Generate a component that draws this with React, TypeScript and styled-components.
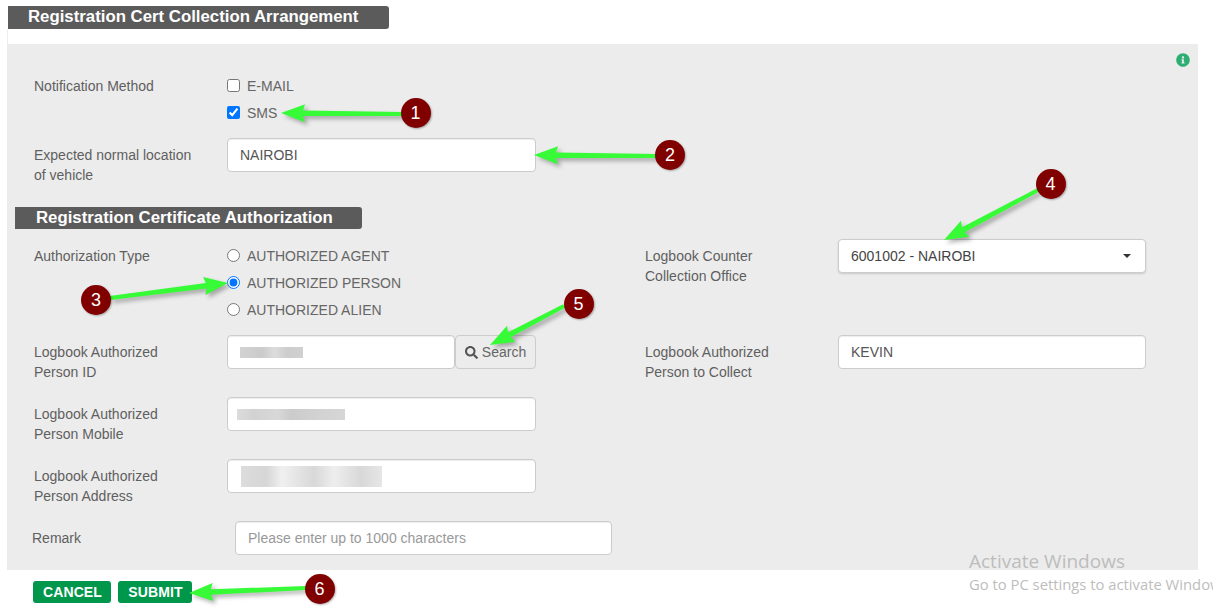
import { FaInfoCircle, FaSearch } from "react-icons/fa";
import styled, { createGlobalStyle } from "styled-components";

const GlobalStyle = createGlobalStyle`
  html, body {
    margin: 0;
    background: #fff;
    overflow: hidden;
  }
  body, input, select, button {
    font-family: "Liberation Sans", Arial, sans-serif;
    font-size: 14px;
  }
`;

const Page = styled.div`
  position: relative;
  width: 1213px;
  height: 616px;
  padding-top: 6px;
  box-sizing: border-box;
  overflow: hidden;
`;
const SectionTitle = styled.h2<{ $width: number; $inset: number }>`
  display: flex;
  align-items: center;
  box-sizing: border-box;
  width: ${(p) => p.$width}px;
  margin: 0;
  padding: 0 0 1px ${(p) => p.$inset}px;
  border-radius: 0 3px 3px 0;
  background: #5b5b5b;
  color: #fff;
  font-size: 16.8px;
  font-weight: 700;
`;
const TopTitle = styled(SectionTitle)`
  height: 23px;
  margin-left: 8px;
`;
const InnerTitle = styled(SectionTitle)`
  height: 22px;
  margin: 22px 0 10px -19px;
`;
const TitleGap = styled.div`
  height: 15px;
  margin-left: 7px;
  border-left: 1px solid #eeeeee;
`;
const Panel = styled.section`
  box-sizing: border-box;
  width: 1191px;
  height: 526px;
  margin-left: 7px;
  padding: 9px 8px 15px 27px;
  background: #ececec;
`;
const InfoRow = styled.div`
  display: flex;
  justify-content: flex-end;
  height: 14px;
  margin-bottom: 5px;
  color: #2fae73;
  font-size: 14px;
`;
const Field = styled.div`
  display: flex;
  align-items: flex-start;
`;
const FieldLabel = styled.label`
  flex: none;
  width: 193px;
  padding-top: 7px;
  color: #5f5f5f;
  line-height: 20px;
`;
const NotifyLabel = styled(FieldLabel)`
  padding-top: 4px;
`;
const OptionGroup = styled.div`
  display: grid;
  grid-auto-rows: 27px;
`;
const AuthGroup = styled(OptionGroup)`
  padding-top: 3px;
`;
const Option = styled.label`
  display: flex;
  align-items: center;
  gap: 7px;
  color: #666;
`;
const Tick = styled.input`
  flex: none;
  width: 13px;
  height: 13px;
  margin: 0;
`;
const LocationField = styled(Field)`
  margin-top: 12px;
`;
const TextInput = styled.input<{ $width?: number }>`
  box-sizing: border-box;
  width: ${(p) => p.$width ?? 309}px;
  height: 34px;
  padding: 0 12px;
  border: 1px solid #ccc;
  border-radius: 4px;
  background: #fff;
  box-shadow: inset 0 1px 1px rgba(0, 0, 0, 0.075);
  color: #555;
  outline: none;
  &::placeholder {
    color: #999;
    opacity: 1;
  }
`;
const MaskedInput = styled.div<{ $width?: number }>`
  display: flex;
  align-items: center;
  box-sizing: border-box;
  width: ${(p) => p.$width ?? 309}px;
  height: 34px;
  padding-left: 12px;
  border: 1px solid #ccc;
  border-radius: 4px;
  background: #fff;
  box-shadow: inset 0 1px 1px rgba(0, 0, 0, 0.075);
`;
const Redacted = styled.span<{ $width: number; $height: number; $shift: number; $stops: string }>`
  width: ${(p) => p.$width}px;
  height: ${(p) => p.$height}px;
  margin-left: ${(p) => p.$shift}px;
  background: linear-gradient(90deg, ${(p) => p.$stops});
`;
const FormGrid = styled.div`
  display: grid;
  grid-template-columns: 611px 1fr;
  grid-template-rows: 81px 47px 47px 47px;
  row-gap: 15px;
`;
const SearchButton = styled.button`
  display: inline-flex;
  align-items: center;
  justify-content: center;
  gap: 4px;
  width: 81px;
  height: 34px;
  padding: 0;
  border: 1px solid #ccc;
  border-radius: 4px;
  background: #ececec;
  color: #666;
  svg {
    color: #555;
    font-size: 13px;
  }
`;
const SelectWrap = styled.div`
  position: relative;
  width: 308px;
  &::after {
    content: "";
    position: absolute;
    top: 15px;
    right: 15px;
    border-top: 4px solid #333;
    border-left: 4px solid transparent;
    border-right: 4px solid transparent;
  }
`;
const Dropdown = styled.select`
  display: block;
  box-sizing: border-box;
  width: 100%;
  height: 34px;
  padding: 0 12px;
  border: 1px solid #ccc;
  border-radius: 4px;
  background: #fff;
  box-shadow: 0 1px 2px rgba(0, 0, 0, 0.15);
  color: #444;
  appearance: none;
  outline: none;
`;
const RemarkField = styled(Field)`
  margin: 15px 0 0 -2px;
`;
const RemarkLabel = styled(FieldLabel)`
  width: 203px;
`;
const Actions = styled.div`
  display: flex;
  gap: 7px;
  margin: 11px 0 0 33px;
`;
const ActionButton = styled.button<{ $width: number }>`
  width: ${(p) => p.$width}px;
  height: 22px;
  padding: 0 0 0 1px;
  border: none;
  border-radius: 3px;
  background: #00964b;
  color: #fff;
  font-weight: 700;
  letter-spacing: 0.1px;
`;
const Watermark = styled.div`
  position: absolute;
  top: 549px;
  left: 969px;
  color: #bdbdbd;
  font-family: "Open Sans", sans-serif;
  white-space: nowrap;
`;
const WatermarkTitle = styled.div`
  font-size: 19px;
  line-height: 25px;
`;
const WatermarkText = styled.div`
  font-size: 14.8px;
  line-height: 20px;
`;
const ArrowLayer = styled.svg`
  position: absolute;
  inset: 0;
  pointer-events: none;
  filter: drop-shadow(3px 3px 2px rgba(0, 0, 0, 0.3));
`;
const Badge = styled.span<{ $x: number; $y: number }>`
  position: absolute;
  top: ${(p) => p.$y - 15}px;
  left: ${(p) => p.$x - 15}px;
  display: flex;
  align-items: center;
  justify-content: center;
  width: 30px;
  height: 30px;
  border-radius: 50%;
  background: #800000;
  box-shadow: 1px 1px 2px rgba(0, 0, 0, 0.3);
  color: #fff;
  font-size: 18px;
`;

type Note = { n: number; badge: [number, number]; tail: [number, number]; tip: [number, number] };

const notes: Note[] = [
  { n: 1, badge: [415.5, 113], tail: [402, 114], tip: [281, 113] },
  { n: 2, badge: [670, 155], tail: [657, 156], tip: [534, 155] },
  { n: 3, badge: [96, 300], tail: [110, 298], tip: [228, 283] },
  { n: 4, badge: [1050.5, 184], tail: [1038, 190], tip: [944, 240] },
  { n: 5, badge: [578.5, 304], tail: [564, 306], tip: [490, 345] },
  { n: 6, badge: [319.5, 589], tail: [306, 588], tip: [189, 593] },
];

// arrow outline from tail to tip, thin shaft and a plain triangular head
const arrowPoints = ({ tail, tip }: Note) => {
  const dx = tip[0] - tail[0];
  const dy = tip[1] - tail[1];
  const len = Math.hypot(dx, dy);
  const ux = dx / len;
  const uy = dy / len;
  const at = (along: number, side: number) =>
    `${tip[0] - ux * along - uy * side},${tip[1] - uy * along + ux * side}`;
  return [
    at(0, 0),
    at(24, 9),
    at(22, 2.8),
    at(len, 2),
    at(len, -2),
    at(22, -2.8),
    at(24, -9),
  ].join(" ");
};

const App = () => {
  return (
    <Page>
      <GlobalStyle />
      <TopTitle $width={381} $inset={20}>
        Registration Cert Collection Arrangement
      </TopTitle>
      <TitleGap />
      <Panel>
        <InfoRow>
          <FaInfoCircle />
        </InfoRow>
        <Field>
          <NotifyLabel>Notification Method</NotifyLabel>
          <OptionGroup>
            <Option>
              <Tick type="checkbox" />
              E-MAIL
            </Option>
            <Option>
              <Tick type="checkbox" defaultChecked />
              SMS
            </Option>
          </OptionGroup>
        </Field>
        <LocationField>
          <FieldLabel>
            Expected normal location
            <br />
            of vehicle
          </FieldLabel>
          <TextInput defaultValue="NAIROBI" />
        </LocationField>
        <InnerTitle $width={347} $inset={21}>
          Registration Certificate Authorization
        </InnerTitle>
        <FormGrid>
          <Field>
            <FieldLabel as="div">Authorization Type</FieldLabel>
            <AuthGroup>
              <Option>
                <Tick type="radio" name="authType" />
                AUTHORIZED AGENT
              </Option>
              <Option>
                <Tick type="radio" name="authType" defaultChecked />
                AUTHORIZED PERSON
              </Option>
              <Option>
                <Tick type="radio" name="authType" />
                AUTHORIZED ALIEN
              </Option>
            </AuthGroup>
          </Field>
          <Field>
            <FieldLabel>
              Logbook Counter
              <br />
              Collection Office
            </FieldLabel>
            <SelectWrap>
              <Dropdown defaultValue="6001002">
                <option value="6001002">6001002 - NAIROBI</option>
              </Dropdown>
            </SelectWrap>
          </Field>
          <Field>
            <FieldLabel>
              Logbook Authorized
              <br />
              Person ID
            </FieldLabel>
            <MaskedInput $width={228}>
              <Redacted
                $width={63}
                $height={11}
                $shift={0}
                $stops="#d2d2d2, #cbcbcb 35%, #dcdcdc 55%, #cdcdcd 75%, #d0d0d0"
              />
            </MaskedInput>
            <SearchButton>
              <FaSearch />
              Search
            </SearchButton>
          </Field>
          <Field>
            <FieldLabel>
              Logbook Authorized
              <br />
              Person to Collect
            </FieldLabel>
            <TextInput $width={308} defaultValue="KEVIN" />
          </Field>
          <Field>
            <FieldLabel>
              Logbook Authorized
              <br />
              Person Mobile
            </FieldLabel>
            <MaskedInput>
              <Redacted
                $width={108}
                $height={11}
                $shift={-3}
                $stops="#dcdcdc, #d2d2d2 15%, #d8d8d8 38%, #cbcbcb 50%, #d2d2d2 75%, #d6d6d6"
              />
            </MaskedInput>
          </Field>
          <div />
          <Field>
            <FieldLabel>
              Logbook Authorized
              <br />
              Person Address
            </FieldLabel>
            <MaskedInput>
              <Redacted
                $width={141}
                $height={21}
                $shift={1}
                $stops="#dcdcdc, #d6d6d6 18%, #f0f0f0 29%, #d8d8d8 52%, #eeeeee 66%, #d8d8d8 85%, #e6e6e6"
              />
            </MaskedInput>
          </Field>
          <div />
        </FormGrid>
        <RemarkField>
          <RemarkLabel>Remark</RemarkLabel>
          <TextInput $width={377} placeholder="Please enter up to 1000 characters" />
        </RemarkField>
      </Panel>
      <Actions>
        <ActionButton $width={78}>CANCEL</ActionButton>
        <ActionButton $width={74}>SUBMIT</ActionButton>
      </Actions>
      <Watermark>
        <WatermarkTitle>Activate Windows</WatermarkTitle>
        <WatermarkText>Go to PC settings to activate Windows.</WatermarkText>
      </Watermark>
      <ArrowLayer width="1213" height="616" viewBox="0 0 1213 616">
        {notes.map((note) => (
          <polygon key={note.n} points={arrowPoints(note)} fill="#36fb36" />
        ))}
      </ArrowLayer>
      {notes.map((note) => (
        <Badge key={note.n} $x={note.badge[0]} $y={note.badge[1]}>
          {note.n}
        </Badge>
      ))}
    </Page>
  );
};

export default App;
